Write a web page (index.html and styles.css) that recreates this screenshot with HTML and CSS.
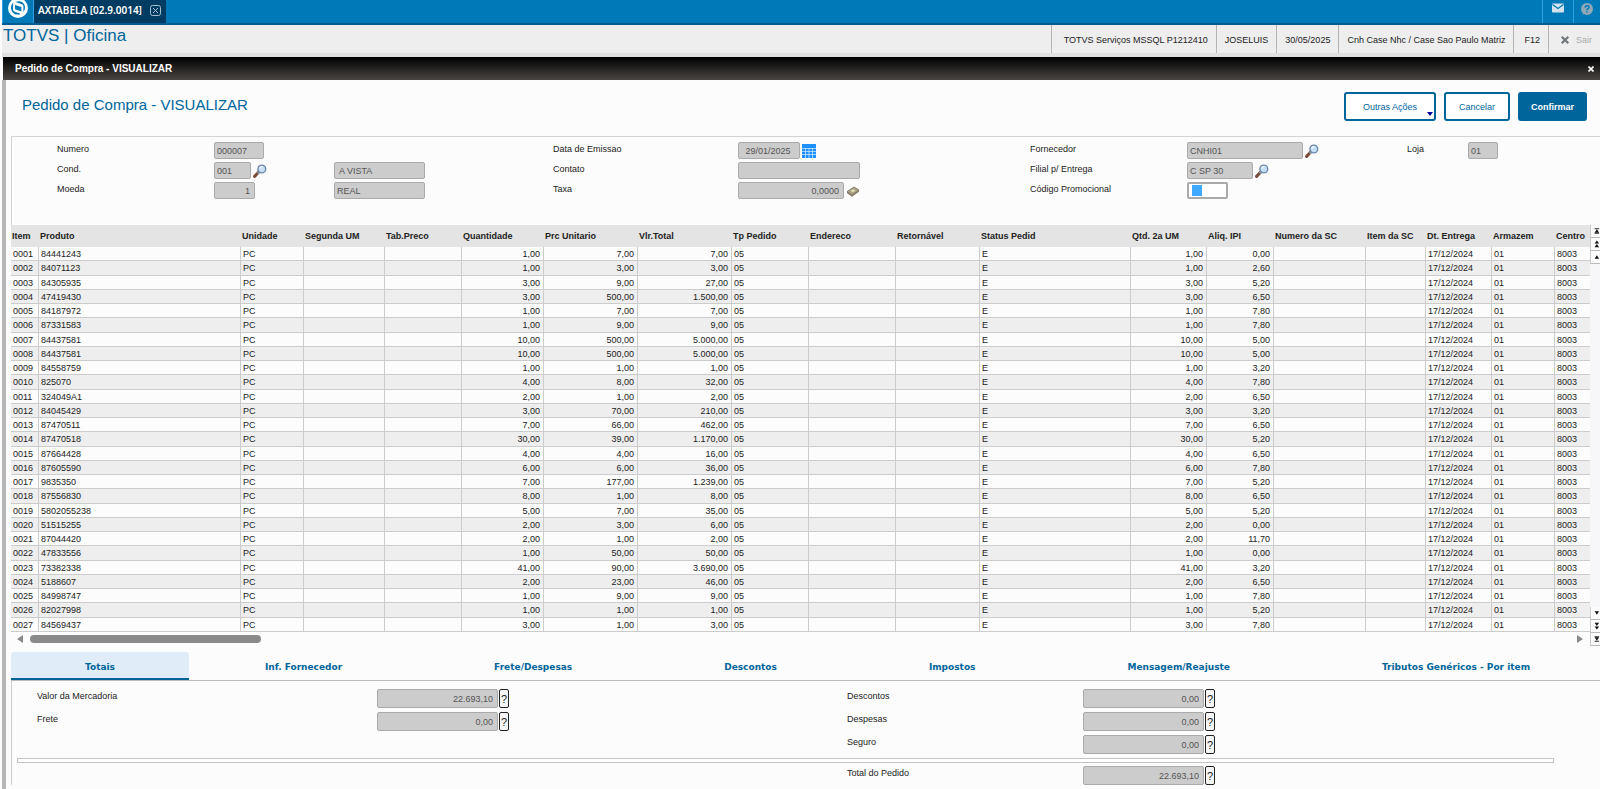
FILE: index.html
```
<!DOCTYPE html>
<html lang="pt-BR">

<head>
    <meta charset="UTF-8">
    <meta name="viewport" content="width=device-width, initial-scale=1.0">
    <title>Pedido de Compra - VISUALIZAR</title>
    <link rel="stylesheet" href="styles.css">
</head>

<body>

    <!-- Iconos reutilizables -->
    <svg class="sprites" aria-hidden="true">
        <symbol id="lupa" viewBox="0 0 14 14">
            <path d="M1.6 12.4 L6 7.8" stroke="#7a4a3a" stroke-width="3" stroke-linecap="round" />
            <path d="M4.6 9.4 L6.4 7.6" stroke="#8d99a8" stroke-width="2" />
            <circle cx="8.8" cy="5" r="3.9" fill="#c5e0f5" stroke="#6b87ac" stroke-width="1.4" />
            <path d="M6.8 4.8 a2.2 2.2 0 0 1 2.4 -2" fill="none" stroke="#fff" stroke-width="1.2" />
        </symbol>
        <symbol id="primeiro" viewBox="0 0 10 12">
            <path d="M4 3.5 h5 M4 8.5 h5" stroke="#111" />
            <path d="M6.5 4 l2.5 4 h-5 z" fill="#111" />
        </symbol>
        <symbol id="duplo" viewBox="0 0 10 12">
            <path d="M6.5 2 l2.5 3.5 h-5 z M6.5 6 l2.5 3.5 h-5 z" fill="#111" />
        </symbol>
        <symbol id="simples" viewBox="0 0 10 12">
            <path d="M6.5 4 l2.5 4 h-5 z" fill="#111" />
        </symbol>
    </svg>

    <header class="topo">
        <div class="logo">
            <svg width="20" height="20" viewBox="0 0 20 20">
                <circle cx="10" cy="10" r="10" fill="#fff" />
                <path d="M7 7 L13.4 9 V13.4 L7.8 11.6 Q7 11.2 7 10.4 Z" fill="#0079b8" />
                <path d="M5.2 4.6 Q3 6.8 3 9.8 Q3.2 14.4 7.2 16.2 L11.4 16.8 L12 15.6 L6.6 13.8 Q5 13.2 5 11.6 Z" fill="#0079b8" />
                <path d="M7.6 4 Q10.4 2.4 13.6 3.8 Q17 5.8 17 9.8 Q17 12 15.4 14.2 V8.2 Q15.4 6.8 14 6.3 Z" fill="#0079b8" />
            </svg>
        </div>
        <div class="aba-programa">
            <span>AXTABELA [02.9.0014]</span>
            <button type="button" class="fechar-aba" aria-label="Fechar aba">
                <svg width="11" height="11" viewBox="0 0 11 11" fill="none" stroke="#a9c0d0">
                    <rect x="0.5" y="0.5" width="10" height="10" rx="2" />
                    <path d="M3 3 L8 8 M8 3 L3 8" />
                </svg>
            </button>
        </div>
        <div class="topo-acoes">
            <button type="button" aria-label="Mensagens">
                <svg width="12" height="10" viewBox="0 0 12 10">
                    <rect y="0.5" width="12" height="9" rx="1" fill="#d3e2ec" />
                    <path d="M0.5 1.5 L6 5.5 L11.5 1.5" fill="none" stroke="#0079b8" stroke-width="1.2" />
                </svg>
            </button>
            <button type="button" aria-label="Ajuda">
                <svg width="12" height="12" viewBox="0 0 12 12">
                    <circle cx="6" cy="6" r="6" fill="#8fa9b9" />
                    <path d="M4 4.6 Q4.2 2.8 6 2.8 Q8 2.8 8 4.5 Q8 5.5 6 6.4 V7.3 M6 8.2 V9.6" fill="none" stroke="#0079b8" stroke-width="1.4" />
                </svg>
            </button>
        </div>
    </header>

    <div class="barra">
        <h1>TOTVS | Oficina</h1>
        <ul class="status">
            <li class="status-ambiente">TOTVS Serviços MSSQL P1212410</li>
            <li>JOSELUIS</li>
            <li>30/05/2025</li>
            <li>Cnh Case Nhc / Case Sao Paulo Matriz</li>
            <li class="status-f12">F12</li>
            <li class="status-sair">
                <button type="button">
                    <svg width="8" height="8" viewBox="0 0 8 8" stroke="#6d7278" stroke-width="2">
                        <path d="M0.7 0.7 L7.3 7.3 M7.3 0.7 L0.7 7.3" />
                    </svg>
                    Sair
                </button>
            </li>
        </ul>
    </div>

    <div class="janela-titulo">
        <span>Pedido de Compra - VISUALIZAR</span>
        <button type="button" aria-label="Fechar">
            <svg width="6" height="6" viewBox="0 0 6 6" stroke="#fff" stroke-width="1.6">
                <path d="M0.5 0.5 L5.5 5.5 M5.5 0.5 L0.5 5.5" />
            </svg>
        </button>
    </div>

    <main class="janela">

        <div class="cabecalho">
            <h2>Pedido de Compra - VISUALIZAR</h2>
            <div class="botoes">
                <button type="button" class="botao botao-menu">Outras Ações</button>
                <button type="button" class="botao">Cancelar</button>
                <button type="button" class="botao botao-primario">Confirmar</button>
            </div>
        </div>

        <form class="formulario">
            <label for="numero">Numero</label>
            <div class="campo campo-duplo"><input id="numero" class="w-50" value="000007" disabled></div>
            <label for="emissao">Data de Emissao</label>
            <div class="campo">
                <input id="emissao" class="w-62 centro" value="29/01/2025" disabled>
                <svg width="14" height="14" viewBox="0 0 14 14">
                    <rect width="14" height="14" fill="#1e90ff" />
                    <path d="M0 4.5 H14 M0 7.5 H14 M0 10.5 H14 M3.5 4 V14 M7 4 V14 M10.5 4 V14" stroke="#d6ebff" stroke-width="0.7" />
                </svg>
            </div>
            <label for="fornecedor">Fornecedor</label>
            <div class="campo">
                <input id="fornecedor" class="w-116" value="CNHI01" disabled>
                <svg width="14" height="14"><use href="#lupa" /></svg>
            </div>
            <label for="loja">Loja</label>
            <div class="campo"><input id="loja" class="w-30" value="01" disabled></div>

            <label for="cond">Cond.</label>
            <div class="campo">
                <input id="cond" class="w-37" value="001" disabled>
                <svg width="14" height="14"><use href="#lupa" /></svg>
            </div>
            <div class="campo"><input class="w-91" value=" A VISTA" aria-label="Descrição da condição" disabled></div>
            <label for="contato">Contato</label>
            <div class="campo"><input id="contato" class="w-122" value="" disabled></div>
            <label for="filial">Filial p/ Entrega</label>
            <div class="campo campo-final">
                <input id="filial" class="w-66" value="C SP 30" disabled>
                <svg width="14" height="14"><use href="#lupa" /></svg>
            </div>

            <label for="moeda">Moeda</label>
            <div class="campo"><input id="moeda" class="w-41 direita" value="1" disabled></div>
            <div class="campo"><input class="w-91" value="REAL" aria-label="Descrição da moeda" disabled></div>
            <label for="taxa">Taxa</label>
            <div class="campo">
                <input id="taxa" class="w-106 direita" value="0,0000" disabled>
                <svg width="14" height="14" viewBox="0 0 14 14">
                    <path d="M1 7.5 L8 3 L13 6 L6 11 Z" fill="#a9a184" stroke="#6d6657" stroke-width="0.7" />
                    <path d="M1 7.5 V9.3 L6 12.8 L13 7.8 V6 L6 11 Z" fill="#8a7b6a" />
                    <path d="M4.5 6.8 L7 5 L9.5 6.5 L7 8.5 Z" fill="#d8dcae" />
                </svg>
            </div>
            <label for="promocional">Código Promocional</label>
            <div class="campo campo-final">
                <div class="promocional"><input id="promocional" type="text" value=""></div>
            </div>
        </form>

        <div class="grade">
            <div class="grade-area">
                <table>
                    <colgroup id="colunas"></colgroup>
                    <thead>
                        <tr id="titulos"></tr>
                    </thead>
                    <tbody id="itens"></tbody>
                </table>
                <div class="rolagem">
                    <svg width="6" height="8" viewBox="0 0 6 8"><path d="M6 0 V8 L0 4 Z" fill="#8a8a8a" /></svg>
                    <div class="rolagem-trilho"><div class="rolagem-barra"></div></div>
                    <svg width="6" height="8" viewBox="0 0 6 8"><path d="M0 0 V8 L6 4 Z" fill="#8a8a8a" /></svg>
                </div>
            </div>
            <div class="passos">
                <button type="button" aria-label="Primeiro"><svg width="10" height="12"><use href="#primeiro" /></svg></button>
                <button type="button" aria-label="Página anterior"><svg width="10" height="12"><use href="#duplo" /></svg></button>
                <button type="button" aria-label="Anterior"><svg width="10" height="12"><use href="#simples" /></svg></button>
                <button type="button" class="abaixo passos-fim" aria-label="Próximo"><svg width="10" height="12"><use href="#simples" /></svg></button>
                <button type="button" class="abaixo" aria-label="Próxima página"><svg width="10" height="12"><use href="#duplo" /></svg></button>
                <button type="button" class="abaixo" aria-label="Último"><svg width="10" height="12"><use href="#primeiro" /></svg></button>
            </div>
        </div>

        <div class="abas">
            <button type="button" class="aba ativa">Totais</button>
            <button type="button" class="aba">Inf. Fornecedor</button>
            <button type="button" class="aba">Frete/Despesas</button>
            <button type="button" class="aba">Descontos</button>
            <button type="button" class="aba">Impostos</button>
            <button type="button" class="aba">Mensagem/Reajuste</button>
            <button type="button" class="aba">Tributos Genéricos - Por item</button>
        </div>

        <section class="totais">
            <div class="totais-linhas">
                <label for="mercadoria">Valor da Mercadoria</label>
                <div class="total"><input id="mercadoria" value="22.693,10" disabled><button type="button">?</button></div>
                <label for="descontos">Descontos</label>
                <div class="total"><input id="descontos" value="0,00" disabled><button type="button">?</button></div>
                <label for="frete">Frete</label>
                <div class="total"><input id="frete" value="0,00" disabled><button type="button">?</button></div>
                <label for="despesas">Despesas</label>
                <div class="total"><input id="despesas" value="0,00" disabled><button type="button">?</button></div>
                <label for="seguro" class="coluna-3">Seguro</label>
                <div class="total"><input id="seguro" value="0,00" disabled><button type="button">?</button></div>
            </div>
            <div class="divisor"></div>
            <div class="totais-linhas">
                <label for="total" class="coluna-3">Total do Pedido</label>
                <div class="total"><input id="total" value="22.693,10" disabled><button type="button">?</button></div>
            </div>
        </section>
    </main>

    <script>
        // Columnas: título, ancho, clase
        const colunas = [
            ["Item", 28], ["Produto", 0], ["Unidade", 63], ["Segunda UM", 81], ["Tab.Preco", 77],
            ["Quantidade", 82, "direita"], ["Prc Unitario", 94, "direita"], ["Vlr.Total", 94, "direita"],
            ["Tp Pedido", 77], ["Endereco", 87], ["Retornável", 84], ["Status Pedid", 151],
            ["Qtd. 2a UM", 76, "direita"], ["Aliq. IPI", 67, "direita"], ["Numero da SC", 92],
            ["Item da SC", 60], ["Dt. Entrega", 66], ["Armazem", 63], ["Centro", 35]
        ];

        // produto, quantidade, preço unitário, total, IPI
        const itens = [
            ["84441243", "1,00", "7,00", "7,00", "0,00"],
            ["84071123", "1,00", "3,00", "3,00", "2,60"],
            ["84305935", "3,00", "9,00", "27,00", "5,20"],
            ["47419430", "3,00", "500,00", "1.500,00", "6,50"],
            ["84187972", "1,00", "7,00", "7,00", "7,80"],
            ["87331583", "1,00", "9,00", "9,00", "7,80"],
            ["84437581", "10,00", "500,00", "5.000,00", "5,00"],
            ["84437581", "10,00", "500,00", "5.000,00", "5,00"],
            ["84558759", "1,00", "1,00", "1,00", "3,20"],
            ["825070", "4,00", "8,00", "32,00", "7,80"],
            ["324049A1", "2,00", "1,00", "2,00", "6,50"],
            ["84045429", "3,00", "70,00", "210,00", "3,20"],
            ["87470511", "7,00", "66,00", "462,00", "6,50"],
            ["87470518", "30,00", "39,00", "1.170,00", "5,20"],
            ["87664428", "4,00", "4,00", "16,00", "6,50"],
            ["87605590", "6,00", "6,00", "36,00", "7,80"],
            ["9835350", "7,00", "177,00", "1.239,00", "5,20"],
            ["87556830", "8,00", "1,00", "8,00", "6,50"],
            ["5802055238", "5,00", "7,00", "35,00", "5,20"],
            ["51515255", "2,00", "3,00", "6,00", "0,00"],
            ["87044420", "2,00", "1,00", "2,00", "11,70"],
            ["47833556", "1,00", "50,00", "50,00", "0,00"],
            ["73382338", "41,00", "90,00", "3.690,00", "3,20"],
            ["5188607", "2,00", "23,00", "46,00", "6,50"],
            ["84998747", "1,00", "9,00", "9,00", "7,80"],
            ["82027998", "1,00", "1,00", "1,00", "5,20"],
            ["84569437", "3,00", "1,00", "3,00", "7,80"]
        ];

        document.getElementById("colunas").innerHTML = colunas
            .map(c => c[1] ? `<col style="width: ${c[1]}px">` : "<col>").join("");

        document.getElementById("titulos").innerHTML = colunas
            .map(c => `<th>${c[0]}</th>`).join("");

        document.getElementById("itens").innerHTML = itens.map((item, index) => {
            const [produto, qtd, preco, total, ipi] = item;
            const numero = String(index + 1).padStart(4, "0");
            const valores = [numero, produto, "PC", "", "", qtd, preco, total, "05", "", "", "E",
                qtd, ipi, "", "", "17/12/2024", "01", "8003"];
            return "<tr>" + valores.map((v, i) => `<td class="${colunas[i][2] || ""}">${v}</td>`).join("") + "</tr>";
        }).join("");

        // Tabs
        const abas = document.querySelectorAll(".aba");
        abas.forEach(aba => {
            aba.addEventListener("click", () => {
                abas.forEach(a => a.classList.remove("ativa"));
                aba.classList.add("ativa");
            });
        });
    </script>
</body>

</html>
```
FILE: styles.css
```
* {
    box-sizing: border-box;
}

body {
    font-family: "Liberation Sans", Arial, sans-serif;
    font-size: 9px;
    line-height: 12px;
    color: #222;
    margin: 0;
    background-color: #fcfcfc;
    min-height: 100vh;
    display: flex;
    flex-direction: column;
    overflow: hidden;
}

button,
input {
    font: inherit;
    margin: 0;
}

button {
    cursor: pointer;
    padding: 0;
}

h1,
h2,
ul {
    margin: 0;
    padding: 0;
    font-weight: normal;
}

.sprites {
    position: absolute;
    width: 0;
    height: 0;
}

/* Barra superior */
.topo {
    display: flex;
    height: 25px;
    margin-left: 2px;
    background-color: #0079b8;
    border-bottom: 2px solid #005c91;
}

.logo {
    width: 32px;
    border-right: 1px solid #2f9fe6;
    border-left: 1px solid #2f9fe6;
    display: flex;
    justify-content: center;
    align-items: flex-start;
    overflow: hidden;
}

.logo svg {
    margin-top: -2px;
}

.aba-programa {
    display: flex;
    align-items: center;
    gap: 8px;
    padding: 0 5px 3px 4px;
    background-color: #003b61;
    color: #fff;
    font-family: "Noto Sans", sans-serif;
    font-size: 10px;
    font-weight: 600;
}

.fechar-aba {
    display: flex;
    background: none;
    border: none;
}

.topo-acoes {
    display: flex;
    margin-left: auto;
}

.topo-acoes button {
    width: 31px;
    background: none;
    border: none;
    border-left: 1px solid #2f9fe6;
    display: flex;
    justify-content: center;
    padding-top: 3px;
}

.topo-acoes button:last-child {
    width: 27px;
}

/* Barra de estado */
.barra {
    display: flex;
    justify-content: space-between;
    height: 32px;
    margin-left: 2px;
    background-color: #eee;
    border-bottom: 4px solid #e0e0e0;
}

.barra h1 {
    color: #00659b;
    font-size: 17px;
    line-height: 22px;
    padding-left: 1px;
}

.status {
    display: flex;
    list-style: none;
}

.status li {
    display: flex;
    align-items: center;
    padding: 1px 8px 0;
    border-left: 1px solid #b4b4b4;
}

.status .status-ambiente,
.status .status-sair {
    padding-left: 12px;
}

.status .status-f12 {
    padding-left: 10px;
}

.status-sair button {
    display: flex;
    align-items: center;
    gap: 7px;
    border: none;
    background: none;
    color: #aaa;
}

/* Ventana */
.janela-titulo {
    display: flex;
    justify-content: space-between;
    align-items: center;
    height: 23px;
    margin-left: 3px;
    padding: 0 6px 0 12px;
    background: linear-gradient(#000, #4a4542);
    color: #fff;
    font-size: 10px;
    font-weight: bold;
}

.janela-titulo button {
    display: flex;
    background: none;
    border: none;
}

.janela {
    flex-grow: 1;
    margin-left: 2px;
    padding-left: 5px;
    border-left: 4px solid #b5b5b5;
}

.cabecalho {
    display: flex;
    justify-content: space-between;
    height: 56px;
    padding: 12px 13px 0 11px;
}

.cabecalho h2 {
    color: #00659b;
    font-size: 15px;
    line-height: 26px;
}

.botoes {
    display: flex;
    align-items: flex-start;
    gap: 8px;
}

.botao {
    position: relative;
    height: 29px;
    padding: 0 13px;
    border: 2px solid #00659b;
    border-radius: 3px;
    background-color: #fff;
    color: #00659b;
}

.botao-menu {
    padding: 0 17px;
}

.botao-menu::after {
    content: "";
    position: absolute;
    right: 1px;
    bottom: 3px;
    border: 3px solid transparent;
    border-top: 4px solid #0000a8;
    border-bottom: none;
}

.botao-primario {
    background-color: #00659b;
    color: #fff;
    font-weight: bold;
    padding: 0 11px;
}

/* Formulario */
.formulario {
    display: grid;
    grid-template-columns: 157fr 120fr 219fr 185fr 292fr 157fr 220fr 61fr 132fr;
    row-gap: 3px;
    align-content: start;
    height: 89px;
    padding: 5px 0 0 45px;
    border-top: 1px solid #d4d4d4;
    border-left: 1px solid #d4d4d4;
}

label {
    padding-top: 1px;
}

.campo {
    display: flex;
    align-items: center;
    gap: 2px;
}

.campo-duplo {
    grid-column: span 2;
}

.campo-final {
    grid-column: span 3;
}

.formulario input:disabled,
.total input {
    height: 17px;
    padding: 1px 4px 0 2px;
    border: 1px solid #aaa;
    border-radius: 2px;
    background-color: #ccc;
    color: #555;
}

.formulario .w-30 { width: 30px; }
.formulario .w-37 { width: 37px; }
.formulario .w-41 { width: 41px; }
.formulario .w-50 { width: 50px; }
.formulario .w-62 { width: 62px; }
.formulario .w-66 { width: 66px; }
.formulario .w-91 { width: 91px; }
.formulario .w-106 { width: 106px; }
.formulario .w-116 { width: 116px; }
.formulario .w-122 { width: 122px; }

.direita {
    text-align: right;
}

.centro {
    text-align: center;
}

.promocional {
    display: flex;
    width: 41px;
    height: 17px;
    padding: 1px 3px;
    border: 2px solid #aaa;
    border-radius: 2px;
    background-color: #fff;
}

.promocional input {
    width: 10px;
    padding: 0;
    border: none;
    background-color: #3fa9ff;
}

/* Grilla de ítems */
.grade {
    display: flex;
}

.grade-area {
    flex: 1;
    min-width: 0;
}

table {
    width: 100%;
    height: 407px;
    table-layout: fixed;
    border-collapse: separate;
    border-spacing: 0;
}

th {
    height: 22px;
    padding: 0 0 0 1px;
    background-color: #e4e4e4;
    text-align: left;
    white-space: nowrap;
    overflow: hidden;
}

td {
    padding: 2px 3px 0 2px;
    border-right: 1px solid #ccc;
    border-bottom: 1px solid #ccc;
    line-height: 11px;
    white-space: nowrap;
}

td:last-child {
    border-right: none;
}

tbody tr:nth-child(even) {
    background-color: #eee;
}

.rolagem {
    display: flex;
    align-items: center;
    height: 14px;
    gap: 7px;
    padding: 0 7px 0 6px;
}

.rolagem-trilho {
    flex: 1;
}

.rolagem-barra {
    width: 15%;
    height: 8px;
    border-radius: 4px;
    background-color: #8a8a8a;
}

.passos {
    display: flex;
    flex-direction: column;
    width: 10px;
    background-color: #f7f7f9;
}

.passos button {
    display: flex;
    height: 13px;
    border: none;
    border-left: 1px solid #ccc;
    border-bottom: 1px solid #bbb;
    background-color: #fcfcfc;
}

.passos .passos-fim {
    margin-top: auto;
}

.abaixo svg {
    transform: scaleY(-1);
}

/* Tabs */
.abas {
    display: flex;
    margin-top: 6px;
    border-bottom: 1px solid #bbb;
    overflow: hidden;
}

.aba {
    flex-shrink: 0;
    height: 28px;
    padding: 4px 76px 0;
    border: none;
    border-bottom: 2px solid transparent;
    border-radius: 3px 3px 0 0;
    background: none;
    color: #00659b;
    font-family: "DejaVu Sans", Verdana, sans-serif;
    font-weight: bold;
}

.aba.ativa {
    padding: 3px 74px 0;
    background-color: #e0edf9;
    border-bottom-color: #00659b;
}

/* Totales */
.totais {
    padding-top: 8px;
    border-left: 1px solid #ccc;
}

.totais-linhas {
    display: grid;
    grid-template-columns: 340fr 470fr 236fr 517fr;
    row-gap: 4px;
    padding-left: 25px;
}

.coluna-3 {
    grid-column: 3;
}

.total {
    display: flex;
    gap: 1px;
}

.total input {
    width: 121px;
    height: 19px;
    text-align: right;
}

.total button {
    width: 10px;
    border: 1px solid #222;
    border-radius: 2px;
    background-color: #f5f5f5;
    color: #222;
    font-size: 11px;
}

.divisor {
    height: 5px;
    margin: 4px 46px 3px 5px;
    border: 1px solid #c4c4c4;
    background-color: #fff;
}
```
